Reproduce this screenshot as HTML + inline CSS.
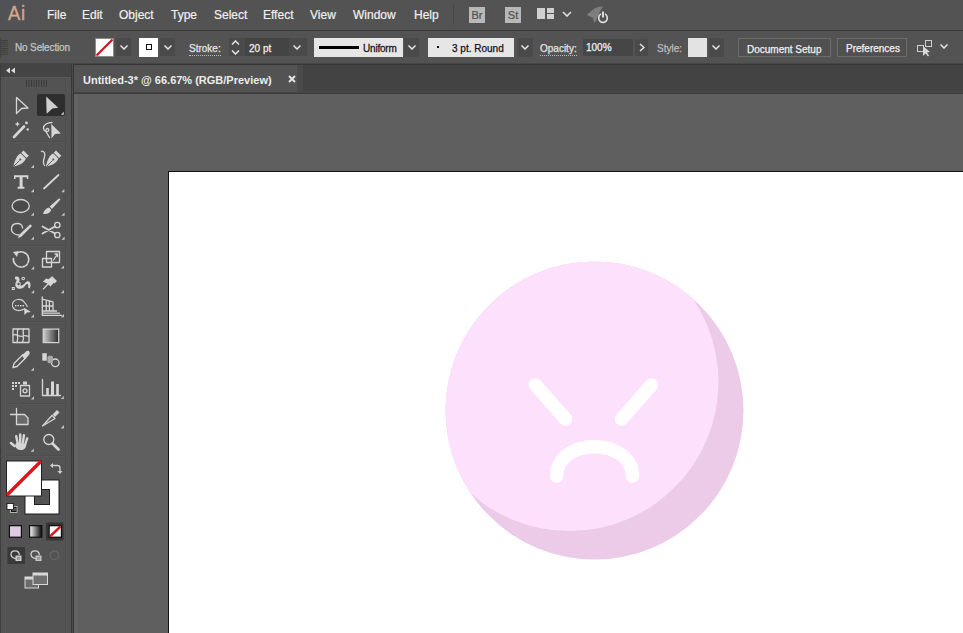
<!DOCTYPE html>
<html><head><meta charset="utf-8">
<style>
*{margin:0;padding:0;box-sizing:border-box}
html,body{width:963px;height:633px;overflow:hidden;background:#535353;font-family:"Liberation Sans",sans-serif;position:relative}
div,svg{position:absolute}
.menu{top:9px;font-size:12px;line-height:12px;color:#f0f0f0;white-space:nowrap;-webkit-text-stroke:0.2px #f0f0f0}
.lbl{font-size:10px;line-height:10px;color:#e4e4e4;white-space:nowrap;-webkit-text-stroke:0.25px currentColor}
.ul{border-bottom:1px dotted #bdbdbd;padding-bottom:1px}
.dd{background:#4a4a4a;width:15px;height:18px}
.chev{width:8px;height:5px}
</style></head><body>
<!-- menubar -->
<div style="left:0;top:0;width:963px;height:30px;background:#535353"></div>
<div style="left:0;top:30px;width:963px;height:1px;background:#393939"></div>
<div style="left:0;top:0;width:33px;height:26px;background:#515255"></div><div style="left:8px;top:2px;font-size:21px;line-height:21px;color:#d9ab8c;-webkit-text-stroke:0.45px #c9987a;letter-spacing:0.8px;transform:scaleX(0.88);transform-origin:0 0">Ai</div>
<div class="menu" style="left:47px">File</div>
<div class="menu" style="left:82px">Edit</div>
<div class="menu" style="left:119px">Object</div>
<div class="menu" style="left:171px">Type</div>
<div class="menu" style="left:214px">Select</div>
<div class="menu" style="left:263px">Effect</div>
<div class="menu" style="left:310px">View</div>
<div class="menu" style="left:353px">Window</div>
<div class="menu" style="left:414px">Help</div>
<div style="left:453px;top:5px;width:1px;height:20px;background:#474747"></div>
<div style="left:469px;top:7px;width:16px;height:16px;background:#b8b8b8;color:#505050;font-size:11px;line-height:16px;text-align:center;-webkit-text-stroke:0.2px #505050">Br</div>
<div style="left:505px;top:7px;width:16px;height:16px;background:#b8b8b8;color:#505050;font-size:11px;line-height:16px;text-align:center;-webkit-text-stroke:0.2px #505050">St</div>
<div style="left:537px;top:8px;width:8px;height:11px;background:#d0d0d0"></div>
<div style="left:547px;top:8px;width:7px;height:5px;background:#d0d0d0"></div>
<div style="left:547px;top:14px;width:7px;height:5px;background:#d0d0d0"></div>
<svg style="left:562px;top:10.5px" width="10" height="6" viewBox="0 0 10 6"><path d="M1 1L5 5L9 1" stroke="#e0e0e0" stroke-width="1.6" fill="none"/></svg>
<svg style="left:584px;top:2px" width="26" height="24" viewBox="0 0 26 24"><path d="M3 13C6 10 10 6 14 5C16 4.5 18 4 19 5C17 7 16 9 15 12L12 19L10 21L9 16Z" fill="#7e7e7e"/><circle cx="19" cy="16" r="4.3" stroke="#dcdcdc" stroke-width="1.7" fill="none"/><path d="M19 9V16" stroke="#535353" stroke-width="3.6"/><path d="M19 9.5V15.5" stroke="#e8e8e8" stroke-width="1.8"/></svg>

<!-- control bar -->
<div style="left:0;top:31px;width:963px;height:32px;background:#535353"></div>
<div style="left:0;top:63px;width:963px;height:1px;background:#464646"></div><div style="left:0;top:64px;width:963px;height:1px;background:#363636"></div>
<svg style="left:0;top:38px" width="9" height="20" viewBox="0 0 9 20"><g fill="#3e3e3e"><rect x="1" y="2" width="7" height="1"/><rect x="1" y="4" width="7" height="1"/><rect x="1" y="6" width="7" height="1"/><rect x="1" y="8" width="7" height="1"/><rect x="1" y="10" width="7" height="1"/><rect x="1" y="12" width="7" height="1"/><rect x="1" y="14" width="7" height="1"/><rect x="1" y="16" width="7" height="1"/></g><rect x="0" y="0" width="1" height="20" fill="#444"/></svg>
<div class="lbl" style="left:15px;top:43px;color:#c4c4c4;letter-spacing:-0.15px">No Selection</div>
<div style="left:95px;top:38px;width:19px;height:19px;background:#fff;border:1px solid #8a8a8a;overflow:hidden"><svg style="left:0;top:0" width="17" height="17"><path d="M0.5 16.5L16.5 0.5" stroke="#cc141c" stroke-width="2.1"/></svg></div>
<div class="dd" style="left:116px;top:38px"></div>
<svg class="chev" style="left:120px;top:45px" viewBox="0 0 8 5"><path d="M0.5 0.5L4 4L7.5 0.5" stroke="#e6e6e6" stroke-width="1.5" fill="none"/></svg>
<div style="left:139px;top:38px;width:19px;height:19px;background:#fff"></div>
<div style="left:146px;top:44px;width:6px;height:6px;border:1px solid #111"></div>
<div class="dd" style="left:160px;top:38px"></div>
<svg class="chev" style="left:164px;top:45px" viewBox="0 0 8 5"><path d="M0.5 0.5L4 4L7.5 0.5" stroke="#e6e6e6" stroke-width="1.5" fill="none"/></svg>
<div class="lbl ul" style="left:189px;top:44px">Stroke:</div>
<div style="left:229px;top:38px;width:78px;height:18px;background:#4a4a4a"></div>
<div style="left:245px;top:38px;width:44px;height:18px;background:#444"></div>
<svg style="left:231px;top:40px" width="9" height="15" viewBox="0 0 9 15"><path d="M1 4.5L4.5 1L8 4.5M1 10.5L4.5 14L8 10.5" stroke="#e6e6e6" stroke-width="1.5" fill="none"/></svg>
<div class="lbl" style="left:249px;top:43.5px;color:#f0f0f0">20 pt</div>
<svg class="chev" style="left:293px;top:45px" viewBox="0 0 8 5"><path d="M0.5 0.5L4 4L7.5 0.5" stroke="#e6e6e6" stroke-width="1.5" fill="none"/></svg>
<div style="left:314px;top:38px;width:89px;height:19px;background:#e6e6e6"></div>
<div style="left:319px;top:46px;width:40px;height:3px;background:#000"></div>
<div class="lbl" style="left:363px;top:44px;color:#1a1a1a;-webkit-text-stroke:0.3px #1a1a1a;letter-spacing:-0.2px">Uniform</div>
<div class="dd" style="left:404px;top:38px;height:19px"></div>
<svg class="chev" style="left:408px;top:45px" viewBox="0 0 8 5"><path d="M0.5 0.5L4 4L7.5 0.5" stroke="#e6e6e6" stroke-width="1.5" fill="none"/></svg>
<div style="left:428px;top:38px;width:86px;height:19px;background:#e6e6e6"></div>
<div style="left:437px;top:46px;width:2px;height:2px;background:#111"></div>
<div class="lbl" style="left:452px;top:44px;color:#111">3 pt. Round</div>
<div class="dd" style="left:518px;top:38px;height:19px"></div>
<svg class="chev" style="left:521px;top:45px" viewBox="0 0 8 5"><path d="M0.5 0.5L4 4L7.5 0.5" stroke="#e6e6e6" stroke-width="1.5" fill="none"/></svg>
<div class="lbl ul" style="left:540px;top:43.5px">Opacity:</div>
<div style="left:583px;top:39px;width:50px;height:17px;background:#464646"></div>
<div class="lbl" style="left:586px;top:42.5px;color:#f0f0f0">100%</div>
<div style="left:635px;top:39px;width:13px;height:17px;background:#4a4a4a"></div>
<svg style="left:639px;top:43px" width="6" height="9" viewBox="0 0 6 9"><path d="M1 1L5 4.5L1 8" stroke="#e6e6e6" stroke-width="1.5" fill="none"/></svg>
<div class="lbl" style="left:657px;top:44px;color:#bdbdbd">Style:</div>
<div style="left:688px;top:38px;width:19px;height:19px;background:#e3e3e3"></div>
<div class="dd" style="left:709px;top:38px;height:19px"></div>
<svg class="chev" style="left:712px;top:45px" viewBox="0 0 8 5"><path d="M0.5 0.5L4 4L7.5 0.5" stroke="#e6e6e6" stroke-width="1.5" fill="none"/></svg>
<div style="left:738px;top:38px;width:93px;height:19px;border:1px solid #6c6c6c;background:#505050"></div>
<div class="lbl" style="left:747px;top:44.5px;color:#f0f0f0">Document Setup</div>
<div style="left:837px;top:38px;width:70px;height:19px;border:1px solid #6c6c6c;background:#505050"></div>
<div class="lbl" style="left:846px;top:44px;color:#f0f0f0">Preferences</div>
<svg style="left:916px;top:39px" width="18" height="18" viewBox="0 0 18 18"><rect x="1.5" y="6.5" width="6" height="6" stroke="#cfcfcf" fill="none"/><rect x="9.5" y="1.5" width="6" height="6" stroke="#cfcfcf" fill="none"/><path d="M7 7L7 17L9.5 14.5L12 17.5L13 16.5L11 13.5L14 13Z" fill="#d8d8d8"/></svg>
<svg class="chev" style="left:940px;top:44px" viewBox="0 0 8 5"><path d="M0.5 0.5L4 4L7.5 0.5" stroke="#e6e6e6" stroke-width="1.5" fill="none"/></svg>

<!-- tools panel -->
<svg style="left:0;top:0" width="74" height="633" viewBox="0 0 74 633">
<g fill="#535353">
<rect x="0" y="77" width="71" height="556"/>
</g>
<rect x="0" y="64" width="71" height="13" fill="#444"/>
<rect x="0" y="77" width="71" height="1" fill="#5a5a5a"/>
<rect x="0" y="64" width="1" height="569" fill="#3e3e3e"/>
<rect x="5" y="78" width="1" height="555" fill="#585858"/>
<rect x="65" y="78" width="1" height="555" fill="#4e4e4e"/>
<rect x="71" y="64" width="1" height="569" fill="#383838"/>
<rect x="72" y="64" width="1" height="569" fill="#4a4a4a"/>
<rect x="73" y="64" width="1" height="569" fill="#363636"/>
<path d="M10 67.5L6 70.5L10 73.5ZM15 67.5L11 70.5L15 73.5Z" fill="#dcdcdc"/>
<g fill="#3a3a3a"><rect x="26" y="80" width="1" height="7"/><rect x="28.5" y="80" width="1" height="7"/><rect x="31" y="80" width="1" height="7"/><rect x="33.5" y="80" width="1" height="7"/><rect x="36" y="80" width="1" height="7"/><rect x="38.5" y="80" width="1" height="7"/><rect x="41" y="80" width="1" height="7"/><rect x="43.5" y="80" width="1" height="7"/><rect x="46" y="80" width="1" height="7"/></g>
<!-- separators -->
<g fill="#4d4d4d"><rect x="6" y="141" width="59" height="1"/><rect x="6" y="245" width="59" height="1"/><rect x="6" y="321" width="59" height="1"/><rect x="6" y="403" width="59" height="1"/><rect x="6" y="455" width="59" height="1"/></g>
<g fill="#575757"><rect x="6" y="142" width="59" height="1"/><rect x="6" y="246" width="59" height="1"/><rect x="6" y="322" width="59" height="1"/><rect x="6" y="404" width="59" height="1"/><rect x="6" y="456" width="59" height="1"/></g>

<!-- active tool bg -->
<rect x="37" y="94" width="28" height="22" rx="2" fill="#2e2e2e"/>

<g stroke="#d6d6d6" fill="none" stroke-width="1.3" stroke-linejoin="round" stroke-linecap="round">
<!-- selection -->
<path d="M16.5 97.5L28 108L21.5 108.5L16.5 113.5Z"/>
<!-- magic wand -->
<path d="M14 137L24 126.5" stroke-width="2.6"/>
<!-- lasso loop -->
<path d="M52 122.5C47.5 122.5 43.5 124.8 43.5 128C43.5 130.5 45.5 132 47.5 131.5C49.2 131 49.2 128.7 47.6 128.5C46 128.3 45.3 130.5 46.5 132.5L49.5 137.5"/>
<!-- curvature s-curve -->
<path d="M44.5 165.5C41 160 46.5 157 44.5 153C43.5 151 42 151 41.5 151.5"/>
<!-- line -->
<path d="M44 188.5L58.5 175" stroke-width="1.8"/>
<!-- ellipse -->
<ellipse cx="20.7" cy="206" rx="8.6" ry="6.5" fill="#4a4a4a"/>
<!-- shaper arc -->
<path d="M19 235C14 235 11.5 232 11.5 229C11.5 225.5 14 223.5 17.5 223.5C20.5 223.5 22.5 225.5 22.5 228" fill="#4c4c4c"/>
<!-- scissors circles -->
<circle cx="57.3" cy="225" r="2.7"/><circle cx="57.3" cy="235" r="2.7"/>
<path d="M42.5 226.5L55 233.5M42.5 233.5L55 226.5" stroke-width="1.8"/>
<!-- rotate -->
<path d="M16.5 253.5C19 251.5 23 251.5 26 253.5C29 256 29.5 261 27 264.5C24.5 267.5 19.5 268 16.5 265.5C14 263.5 13 261 13.5 258.5" stroke-width="1.6" stroke-dasharray="20 1.5 2 1.5 2 1.5 20"/>
<!-- scale -->
<rect x="46.5" y="251.5" width="13" height="11"/>
<rect x="42.5" y="258.5" width="9" height="8.5"/>
<path d="M53.5 260L57.5 254M55 254H57.5V256.5"/>
<!-- perspective grid -->
<path d="M42.3 297V315.3M42.3 299.2L53 301.8V311M46.3 300.2V311M49.4 300.9V311M42.3 306H53M42.3 311H56.5M42.3 313.2H59.5M42.3 315.3H61.5"/>
<!-- mesh -->
<rect x="13" y="329" width="16" height="13.5"/>
<path d="M13 335C17 333 19 338 23 336C26 334.5 27 337 29 336M18 329C16 333 19 337 17 342.5M23.5 329C22 333 25 337 22.5 342.5"/>
<!-- gradient border -->
<!-- eyedropper -->
<path d="M13 367.5L14 363.5L23 354.5L26 357.5L17 366.5Z"/>
<!-- blend circle -->
<circle cx="55.3" cy="362.8" r="3.8"/>
<!-- symbol sprayer can -->
<rect x="20.5" y="385.5" width="9" height="10.5"/>
<circle cx="25" cy="390.8" r="2"/>
<!-- graph axes -->
<path d="M42.5 379.5V395.5H60.5"/>
<!-- artboard -->
<path d="M10.5 414.5H16.5M16.5 408.5V414.5"/>
<path d="M16.5 414.5H24.5L28 418V424.5H16.5Z" fill="#6a6a6a"/>
<!-- knife blade -->
<path d="M42.5 426L52 415.5L55 418.5Z"/>
<!-- zoom -->
<circle cx="48.8" cy="439.5" r="5"/>
<path d="M52.5 443.5L58.5 449.5" stroke-width="2.8"/>
</g>

<g fill="#d6d6d6">
<!-- direct selection filled -->
<path d="M46.2 96.6L58.2 107.8L52.4 108.6L46.6 113.8Z" fill="#cfcfcf"/>
<path d="M13 252L18.5 251L17 257Z"/>
<!-- magic wand sparkles -->
<path d="M17.4 121.5L18.2 123.3L20 124.1L18.2 124.9L17.4 126.7L16.6 124.9L14.8 124.1L16.6 123.3Z"/>
<circle cx="26.5" cy="122.9" r="1.4"/><circle cx="27.7" cy="129.4" r="1.2"/>
<!-- lasso arrow -->
<path d="M51.3 124L60.8 133.5L55 134L51.5 138.5Z"/>
<!-- pen -->
<path d="M23.5 150.5L28.8 155.8L26.5 158L21.3 152.7Z"/>
<path d="M20.8 153.5L25.8 158.5C25 162 20 165.5 13.5 166.5C14.5 160 17.5 154.5 20.8 153.5Z"/>
<path d="M56 150.5L61.3 155.8L59 158L53.8 152.7Z"/>
<path d="M53.3 153.5L58.3 158.5C57.5 162 52.5 165.5 46 166.5C47 160 50 154.5 53.3 153.5Z"/>
<path d="M14 166L19.5 160.5M47 166L52.5 160.5" stroke="#555" stroke-width="0.9"/><circle cx="20.3" cy="159.5" r="1" fill="#555"/><circle cx="53.3" cy="159.5" r="1" fill="#555"/>
<!-- type T -->
<path d="M14 175.3H28.3V179H26.8V177.3H22.6V186.8H24.4V188.8H17.6V186.8H19.6V177.3H15.5V179H14Z"/>
<!-- paintbrush -->
<path d="M59.2 198.3L60.4 199.5L52 209L49.6 206.6Z"/>
<path d="M49 207.5L51.2 209.7C50.5 212.5 47 214.5 43 214C44 210.5 46 208 49 207.5Z"/>
<!-- shaper pencil -->
<path d="M30.3 224.2L32 225.9L21 237L18 238L19 235Z"/>
<!-- pin -->
<path d="M51.5 275.5L57 281L54.5 283.5L53.8 282.8L50.5 286.5L47.5 283.5L42.8 281.8L46.2 278.5L48.5 279.2L52.2 276.2Z"/>
<path d="M48 283L42.5 289L43.5 289.8L49 284Z" />
<!-- warp puppet -->
<path d="M15 277C17 276 19.5 277 19.5 279.5C19.5 282 18 283 19.5 285C21 286.5 23.5 285 25 283C26.5 281 29 280.5 30 282.5C31 284.5 30.5 287 29.5 288.5L28 287.5C28.5 286 28.5 284.5 27.5 284C26.5 283.5 25.5 285 24.5 286.5C22.5 289 18.5 289.5 16.5 287.5C14.5 285.5 15.5 282.5 16.5 281C17 280 16.5 279 15 279.3Z"/>
<rect x="11.8" y="287" width="3" height="3"/>
<circle cx="23.2" cy="278.5" r="1.8"/><circle cx="18.5" cy="284" r="2.3"/>
<circle cx="18.5" cy="284" r="1.2" fill="#555"/><circle cx="23.2" cy="278.5" r="0.8" fill="#555"/><rect x="12.8" y="288" width="1" height="1" fill="#555"/>
<!-- shape builder arrow -->
<path d="M24 307.8L31 312L27 312.5L24.5 315Z"/>
<!-- blend squares -->
<rect x="42.3" y="353.2" width="4.5" height="7.5"/>
<rect x="47.5" y="355.8" width="5.5" height="7.5" rx="1.5" fill="#a8a8a8"/>
<!-- eyedropper top -->
<path d="M22 355.5L26 351.5C27 350.5 29 350.5 29.5 352C30 353 29.5 354.5 28.5 355.5L24.5 359.5Z"/>
<!-- symbol sprayer dots & cap -->
<rect x="12" y="382" width="2" height="2"/><rect x="15" y="382" width="2" height="2"/><rect x="18" y="382" width="2" height="2"/>
<rect x="12" y="385" width="2" height="2"/><rect x="15" y="385" width="2" height="2"/>
<rect x="12" y="388" width="2" height="2"/>
<rect x="23" y="381.5" width="4" height="3"/>
<!-- graph bars -->
<rect x="46.2" y="388" width="2.6" height="7.5"/><rect x="51" y="381.5" width="3" height="14"/><rect x="56.2" y="384" width="2.6" height="11.5"/>
<!-- knife handle -->
<path d="M52.5 414.5L57 410L59.5 412.5L55 417Z"/>
<!-- hand -->
<path d="M16 443L20.5 443L26.5 444C26 448 24.5 450 20.5 450C17.5 450 16 448 15 446Z"/>
<rect x="15.8" y="435" width="2.4" height="10" rx="1.2" transform="rotate(-12 17 440)"/>
<rect x="19" y="433.3" width="2.4" height="11" rx="1.2"/>
<rect x="22.2" y="434" width="2.4" height="10" rx="1.2" transform="rotate(8 23.4 439)"/>
<rect x="25.2" y="437" width="2.3" height="8" rx="1.15" transform="rotate(18 26.3 441)"/>
<rect x="11.5" y="441" width="2.4" height="7" rx="1.2" transform="rotate(-50 12.7 444.5)"/>
</g>

<!-- corner triangles -->
<g fill="#c4c4c4">
<path d="M34 164.7V167.9H30.8Z"/><path d="M34 189V192.2H30.8Z"/><path d="M64.4 189V192.2H61.2Z"/>
<path d="M34 212.6V215.8H30.8Z"/><path d="M64.6 212.6V215.8H61.4Z"/>
<path d="M34 236.5V239.7H30.8Z"/><path d="M64.6 236.5V239.7H61.4Z"/>
<path d="M34.2 266.2V269.4H31Z"/><path d="M64 265.4V268.6H60.8Z"/>
<path d="M34.2 290V293.2H31Z"/><path d="M64 290V293.2H60.8Z"/>
<path d="M34 314.2V317.4H30.8Z"/><path d="M64 314V317.2H60.8Z"/>
<path d="M34 367.6V370.8H30.8Z"/>
<path d="M34 396.2V399.4H30.8Z"/><path d="M63.8 396V399H60.8Z"/>
<path d="M64 425V428.4H60.6Z"/>
<path d="M33.8 448.6V451.8H30.6Z"/>
<path d="M63.8 111.8V114.8H60.8Z" fill="#d0d0d0"/>
</g>
<!-- shape builder blob + dots -->
<path d="M24 309C20 311.5 14.5 311 12.8 307C11.5 303.5 13.5 300 17.5 299.5C20.5 299 23 300 24.5 302.5C26 304.5 27.5 305.5 27 307" stroke="#d0d0d0" stroke-width="1.2" fill="none"/>
<g fill="#e0e0e0"><rect x="15" y="305" width="1.4" height="1.4"/><rect x="17.5" y="305" width="1.4" height="1.4"/><rect x="20" y="305" width="1.4" height="1.4"/><rect x="22.5" y="305" width="1.4" height="1.4"/></g>
<!-- gradient tool -->
<defs><linearGradient id="gt" x1="0" x2="1"><stop offset="0" stop-color="#d0d0d0"/><stop offset="1" stop-color="#2a2a2a"/></linearGradient>
<linearGradient id="gb" x1="0" x2="1"><stop offset="0" stop-color="#f0f0f0"/><stop offset="1" stop-color="#111"/></linearGradient></defs>
<rect x="43.2" y="329.1" width="15.5" height="13.5" fill="url(#gt)" stroke="#d6d6d6" stroke-width="1.2"/>

<!-- fill & stroke -->
<rect x="24.5" y="479.5" width="35" height="35" fill="#1e1e1e"/>
<rect x="25.5" y="480.5" width="33" height="33" fill="#fff"/>
<rect x="34" y="489" width="16" height="16" fill="#1e1e1e"/>
<rect x="35" y="490" width="14" height="14" fill="#535353"/>
<rect x="6" y="460.5" width="36" height="36" fill="#1e1e1e"/>
<rect x="7" y="461.5" width="34" height="34" fill="#fff"/>
<path d="M6.8 495.3L41.2 461" stroke="#e2121c" stroke-width="3.4"/>
<!-- swap arrows -->
<path d="M51.5 465.5H57.5C59.5 465.5 60 466.5 60 468V472" stroke="#d0d0d0" stroke-width="1.3" fill="none"/>
<path d="M50 465.5L53 463V468Z M57.5 471L62.5 471L60 474Z" fill="#d0d0d0"/>
<!-- default mini -->
<rect x="10.5" y="506.5" width="6.5" height="6" fill="#111" stroke="#d0d0d0" stroke-width="0.8"/>
<rect x="12" y="508" width="4" height="3" fill="#535353"/>
<rect x="7" y="503.5" width="6.5" height="6" fill="#fff" stroke="#111" stroke-width="0.8"/>

<!-- color mode buttons -->
<rect x="8.8" y="525" width="13.2" height="12.8" fill="#111"/>
<rect x="10" y="526.3" width="10.8" height="10.3" fill="#dfc9e5"/>
<rect x="29" y="525" width="13.4" height="12.8" fill="#111"/>
<rect x="30.2" y="526.3" width="11" height="10.3" fill="url(#gb)"/>
<rect x="46" y="522.5" width="17.5" height="18" fill="#363636"/>
<rect x="48.6" y="525" width="13.4" height="12.8" fill="#111"/>
<rect x="49.8" y="526.3" width="11" height="10.3" fill="#fff"/>
<path d="M50 536.3L60.5 526.5" stroke="#e2121c" stroke-width="2.4"/>

<!-- draw modes -->
<rect x="7.5" y="547" width="17.5" height="17" fill="#393939"/>
<g stroke="#d0d0d0" stroke-width="1.3" fill="none">
<path d="M18 558.5C14.5 559.5 11 557 11 554.5C11 552 13 550.8 15 550.8C17.5 550.8 19.3 552.5 19.3 555"/>
<path d="M38 558.5C34.5 559.5 31 557 31 554.5C31 552 33 550.8 35 550.8C37.5 550.8 39.3 552.5 39.3 555"/>
</g>
<rect x="15.5" y="555.5" width="6" height="5.5" fill="#d0d0d0"/>
<rect x="16.8" y="556.8" width="3.4" height="3" fill="#9a9a9a"/>
<rect x="35.5" y="555.5" width="6" height="5.5" fill="#c8c8c8"/>
<rect x="36.8" y="556.8" width="3.4" height="3" fill="#9a9a9a"/>
<circle cx="54.5" cy="555.3" r="4.3" stroke="#666" stroke-width="1.4" fill="none"/>

<!-- screen mode -->
<rect x="25" y="577" width="13.5" height="11" fill="#6a6a6a" stroke="#d8d8d8" stroke-width="1"/>
<rect x="25" y="577" width="13.5" height="2.5" fill="#d8d8d8"/>
<rect x="33" y="573" width="14.5" height="11.5" fill="#707070" stroke="#d8d8d8" stroke-width="1"/>
<rect x="33" y="573" width="14.5" height="2.5" fill="#d8d8d8"/>
</svg>

<!-- tab bar -->
<div style="left:74px;top:65px;width:889px;height:28px;background:#434343"></div><div style="left:74px;top:91px;width:889px;height:1px;background:#494949"></div>
<div style="left:74px;top:65px;width:223px;height:27px;background:#535353"></div><div style="left:297px;top:65px;width:6px;height:27px;background:#4a4a4a"></div>
<div style="left:74px;top:93px;width:889px;height:1px;background:#3c3c3c"></div>
<div style="left:83px;top:75px;font-size:11px;line-height:11px;color:#ececec;font-weight:bold;white-space:nowrap">Untitled-3* @ 66.67% (RGB/Preview)</div>
<svg style="left:288px;top:75px" width="8" height="8" viewBox="0 0 8 8"><path d="M1 1L7 7M7 1L1 7" stroke="#e8e8e8" stroke-width="1.8"/></svg>

<!-- canvas -->
<div style="left:74px;top:94px;width:889px;height:539px;background:#5f5f5f"></div>
<div style="left:74px;top:94px;width:4px;height:539px;background:#636363"></div>
<div style="left:168px;top:171px;width:795px;height:462px;background:#fff;border-left:1px solid #111;border-top:1px solid #111"></div>

<!-- emoji -->
<svg style="left:0;top:0" width="963" height="633" viewBox="0 0 963 633">
<defs><clipPath id="cc"><circle cx="594.5" cy="410.5" r="149"/></clipPath></defs>
<circle cx="594.5" cy="410.5" r="149" fill="#ebcbe7"/>
<circle cx="569.5" cy="382" r="149" fill="#fce0fc" clip-path="url(#cc)"/>
<g stroke="#fff" stroke-width="13.5" stroke-linecap="round" fill="none">
<path d="M535.5 385L565.5 419"/>
<path d="M651.5 385L621.5 419"/>
<path d="M556.5 476C556.5 458 574 446.8 594.5 446.8C615 446.8 632.5 458 632.5 476"/>
</g>
</svg>
</body></html>
